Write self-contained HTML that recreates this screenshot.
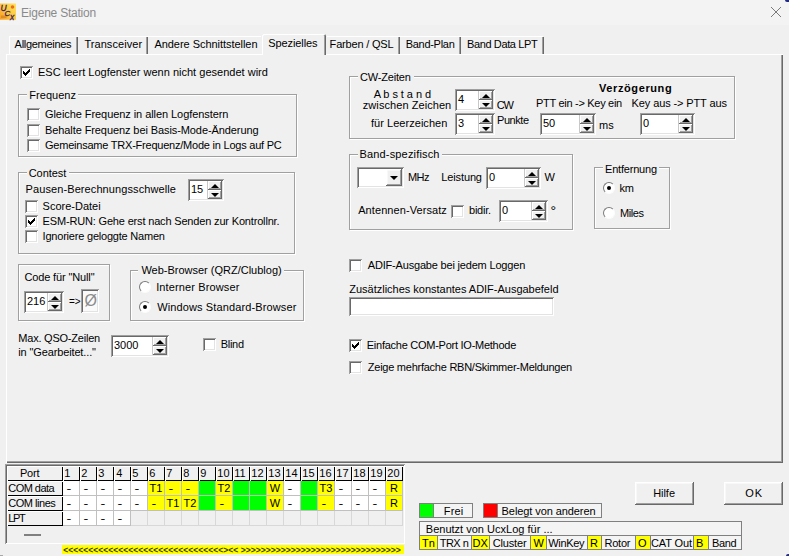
<!DOCTYPE html><html><head><meta charset="utf-8"><title>Eigene Station</title><style>
html,body{margin:0;padding:0;}
body{width:789px;height:556px;overflow:hidden;background:#f0f0f0;position:relative;
 font-family:"Liberation Sans",sans-serif;font-size:11px;color:#000;line-height:13px;}
div,span,i,b{position:absolute;box-sizing:border-box;white-space:nowrap;}
.t{height:13px;}
.cb{width:13px;height:13px;background:#fff;box-shadow:inset 1px 1px 0 #a0a0a0,inset -1px -1px 0 #fff,inset 2px 2px 0 #696969,inset -2px -2px 0 #e3e3e3;}
.cb.on::after{content:"";position:absolute;left:3px;top:3px;width:7px;height:7px;
 background:linear-gradient(#000,#000);clip-path:polygon(0 2px,1px 2px,1px 3px,2px 3px,2px 4px,3px 4px,3px 3px,4px 3px,4px 2px,5px 2px,5px 1px,6px 1px,6px 0,7px 0,7px 3px,6px 3px,6px 4px,5px 4px,5px 5px,4px 5px,4px 6px,3px 6px,3px 7px,2px 7px,2px 6px,1px 6px,1px 5px,0 5px);}
.rb{width:12px;height:12px;border-radius:50%;background:#fff;border:1.5px solid;border-color:#7a7a7a #fbfbfb #fbfbfb #7a7a7a;}
.rb.on::after{content:"";position:absolute;left:2.5px;top:2.5px;width:4px;height:4px;border-radius:50%;background:#000;}
.gb{border:1px solid #a0a0a0;box-shadow:1px 1px 0 #fff,inset 1px 1px 0 #fff;}
.gl{background:#f0f0f0;height:13px;padding:0 2px;}
.sp{background:#fff;box-shadow:inset 1px 1px 0 #a0a0a0,inset -1px -1px 0 #fff,inset 2px 2px 0 #696969,inset -2px -2px 0 #e3e3e3;}
.sp .v{left:3px;}
.ud{right:2px;top:2px;bottom:2px;width:15px;background:#f0f0f0;border-left:1px solid #c8c8c8;}
.ud i{left:0;right:0;height:50%;background:#f0f0f0;box-shadow:inset -1px -1px 0 #696969,inset 1px 1px 0 #fff,inset -2px -2px 0 #a0a0a0;}
.ud i.u{top:0;} .ud i.d{bottom:0;}
.ud i::after{content:"";position:absolute;left:50%;top:50%;margin-left:-4px;margin-top:-2px;border:4px solid transparent;}
.ud i.u::after{border-top-width:0;border-bottom:4px solid #000;}
.ud i.d::after{border-bottom-width:0;border-top:4px solid #000;}
.btn{background:#f0f0f0;text-align:center;box-shadow:inset -1px -1px 0 #696969,inset 1px 1px 0 #fff,inset -2px -2px 0 #a0a0a0,inset 2px 2px 0 #f8f8f8;}
.y{background:#ffff00;}
</style></head><body>
<div style="left:0;top:0;width:789px;height:25px;background:#f3f3f3"></div>
<svg style="position:absolute;left:0;top:3px" width="17" height="18" viewBox="0 0 17 18">
<defs><linearGradient id="ig" x1="1" y1="0" x2="0" y2="1"><stop offset="0" stop-color="#ffe45e"/><stop offset=".55" stop-color="#fbc53c"/><stop offset="1" stop-color="#f59a22"/></linearGradient></defs>
<rect x="0" y="0.5" width="16" height="16.2" fill="url(#ig)"/>
<circle cx="12.5" cy="4" r="1.8" fill="#ea6a1c"/>
<rect x="1" y="12.5" width="5.5" height="2.5" fill="#c8741e" opacity=".55"/>
<text x="0.6" y="7.8" font-family="Liberation Sans,sans-serif" font-size="8.5" font-style="italic" fill="#3b2060" stroke="#3b2060" stroke-width=".3">U</text>
<text x="4.6" y="12.5" font-family="Liberation Sans,sans-serif" font-size="8" font-style="italic" fill="#3b2060" stroke="#3b2060" stroke-width=".3">C</text>
<text x="9.9" y="16.5" font-family="Liberation Sans,sans-serif" font-size="8.5" font-style="italic" fill="#3b2060" stroke="#3b2060" stroke-width=".3">x</text>
</svg>
<span class="t" style="left:21.0px;top:7.3px;letter-spacing:-0.223px;font-size:12px;color:#8a8a8a;">Eigene Station</span>
<svg style="position:absolute;left:770px;top:6px" width="12" height="12" viewBox="0 0 12 12"><path d="M1 1 L11 11 M11 1 L1 11" stroke="#7a7a7a" stroke-width="1" fill="none"/></svg>
<div style="left:785px;top:0;width:4px;height:2px;background:#1f2a8c;border-radius:0 0 0 4px"></div>
<div style="left:786px;top:554px;width:3px;height:2px;background:#1f2a8c;border-radius:3px 0 0 0"></div>
<div style="left:0;top:555px;width:3px;height:1px;background:#a8a8a8"></div>
<div style="left:6px;top:54px;width:777px;height:409px;box-shadow:inset 1px 1px 0 #fff,inset -1px -1px 0 #696969,inset -2px -2px 0 #a0a0a0"></div>
<span class="t" style="left:14.6px;top:38.0px;letter-spacing:-0.300px;">Allgemeines</span>
<div style="left:76px;top:37px;width:2px;height:17px;background:linear-gradient(90deg,#a0a0a0 50%,#696969 50%)"></div>
<span class="t" style="left:84.4px;top:38.0px;letter-spacing:0.060px;">Transceiver</span>
<div style="left:146px;top:37px;width:2px;height:17px;background:linear-gradient(90deg,#a0a0a0 50%,#696969 50%)"></div>
<span class="t" style="left:154.4px;top:38.0px;letter-spacing:-0.040px;">Andere Schnittstellen</span>
<div style="left:262px;top:34px;width:64px;height:21px;background:#f0f0f0;box-shadow:inset 1px 1px 0 #fff,inset -1px 0 0 #696969,inset -2px 0 0 #a0a0a0;border-radius:2px 2px 0 0"></div>
<span class="t" style="left:268.3px;top:37.0px;letter-spacing:-0.100px;">Spezielles</span>
<span class="t" style="left:329.6px;top:38.0px;letter-spacing:-0.182px;">Farben / QSL</span>
<div style="left:398px;top:37px;width:2px;height:17px;background:linear-gradient(90deg,#a0a0a0 50%,#696969 50%)"></div>
<span class="t" style="left:405.7px;top:38.0px;letter-spacing:-0.288px;">Band-Plan</span>
<div style="left:459px;top:37px;width:2px;height:17px;background:linear-gradient(90deg,#a0a0a0 50%,#696969 50%)"></div>
<span class="t" style="left:467.0px;top:38.0px;letter-spacing:-0.375px;">Band Data LPT</span>
<div style="left:542px;top:37px;width:2px;height:17px;background:linear-gradient(90deg,#a0a0a0 50%,#696969 50%)"></div>
<div style="left:9px;top:36px;width:252px;height:1px;background:#fff"></div>
<div style="left:9px;top:36px;width:1px;height:18px;background:#fff"></div>
<div style="left:327px;top:36px;width:216px;height:1px;background:#fff"></div>
<i class="cb on" style="left:20px;top:66px"></i>
<span class="t" style="left:38.0px;top:66.0px;letter-spacing:0.014px;">ESC leert Logfenster wenn nicht gesendet wird</span>
<div class="gb" style="left:18px;top:94px;width:279px;height:63px"></div>
<div style="left:27.3px;top:88px;width:51.2px;height:13px;background:#f0f0f0"></div>
<span class="t" style="left:29.3px;top:89.0px;letter-spacing:0.029px;">Frequenz</span>
<i class="cb" style="left:27px;top:108px"></i>
<span class="t" style="left:45.0px;top:108.0px;letter-spacing:-0.067px;">Gleiche Frequenz in allen Logfenstern</span>
<i class="cb" style="left:27px;top:124px"></i>
<span class="t" style="left:45.0px;top:124.0px;letter-spacing:-0.090px;">Behalte Frequenz bei Basis-Mode-Änderung</span>
<i class="cb" style="left:27px;top:139px"></i>
<span class="t" style="left:45.0px;top:139.0px;letter-spacing:-0.224px;">Gemeinsame TRX-Frequenz/Mode in Logs auf PC</span>
<div class="gb" style="left:18px;top:172px;width:277px;height:82px"></div>
<div style="left:26.7px;top:166px;width:42.7px;height:13px;background:#f0f0f0"></div>
<span class="t" style="left:28.7px;top:167.0px;letter-spacing:-0.050px;">Contest</span>
<span class="t" style="left:25.6px;top:183.0px;letter-spacing:0.092px;">Pausen-Berechnungsschwelle</span>
<div class="sp" style="left:188px;top:179px;width:36px;height:22px"><span class="v t" style="top:4px">15</span><div class="ud"><i class="u"></i><i class="d"></i></div></div>
<i class="cb" style="left:25px;top:200px"></i>
<span class="t" style="left:42.6px;top:200.0px;letter-spacing:-0.000px;">Score-Datei</span>
<i class="cb on" style="left:25px;top:215px"></i>
<span class="t" style="left:42.6px;top:215.0px;letter-spacing:-0.169px;">ESM-RUN: Gehe erst nach Senden zur Kontrollnr.</span>
<i class="cb" style="left:25px;top:230px"></i>
<span class="t" style="left:42.6px;top:230.0px;letter-spacing:-0.209px;">Ignoriere geloggte Namen</span>
<div class="gb" style="left:18px;top:264px;width:92px;height:57px"></div>
<span class="t" style="left:24.4px;top:271.0px;letter-spacing:-0.129px;">Code für "Null"</span>
<div class="sp" style="left:24px;top:291px;width:40px;height:22px"><span class="v t" style="top:4px">216</span><div class="ud"><i class="u"></i><i class="d"></i></div></div>
<span class="t" style="left:69.0px;top:295.3px;letter-spacing:-0.200px;font-size:10px;">=&gt;</span>
<div class="sp" style="left:81px;top:289px;width:18px;height:24px;background:#fafafa"><span style="left:3.5px;top:2px;font-size:16px;line-height:20px;color:#8c8c8c">Ø</span></div>
<div class="gb" style="left:130px;top:270px;width:174px;height:51px"></div>
<div style="left:138.4px;top:264px;width:145.9px;height:13px;background:#f0f0f0"></div>
<span class="t" style="left:141.4px;top:264.0px;letter-spacing:-0.004px;">Web-Browser (QRZ/Clublog)</span>
<i class="rb" style="left:139px;top:281px"></i>
<span class="t" style="left:156.2px;top:281.0px;letter-spacing:0.120px;">Interner Browser</span>
<i class="rb on" style="left:139px;top:301px"></i>
<span class="t" style="left:157.2px;top:301.0px;letter-spacing:0.122px;">Windows Standard-Browser</span>
<span class="t" style="left:18.3px;top:332.0px;letter-spacing:-0.221px;">Max. QSO-Zeilen</span>
<span class="t" style="left:18.3px;top:346.0px;letter-spacing:-0.135px;">in "Gearbeitet..."</span>
<div class="sp" style="left:111px;top:335px;width:58px;height:22px"><span class="v t" style="top:4px">3000</span><div class="ud"><i class="u"></i><i class="d"></i></div></div>
<i class="cb" style="left:203px;top:338px"></i>
<span class="t" style="left:220.8px;top:338.0px;letter-spacing:-0.300px;">Blind</span>
<div class="gb" style="left:349px;top:76px;width:386px;height:63px"></div>
<div style="left:358.0px;top:70px;width:55.5px;height:13px;background:#f0f0f0"></div>
<span class="t" style="left:360.0px;top:71.0px;letter-spacing:-0.188px;">CW-Zeiten</span>
<span class="t" style="left:373.7px;top:88.0px;letter-spacing:-0.058px;">A b s t a n d</span>
<span class="t" style="left:362.8px;top:99.0px;letter-spacing:0.067px;">zwischen Zeichen</span>
<span class="t" style="left:371.0px;top:117.0px;letter-spacing:0.036px;">für Leerzeichen</span>
<div class="sp" style="left:455px;top:89px;width:40px;height:22px"><span class="v t" style="top:4px">4</span><div class="ud"><i class="u"></i><i class="d"></i></div></div>
<div class="sp" style="left:455px;top:113px;width:40px;height:22px"><span class="v t" style="top:4px">3</span><div class="ud"><i class="u"></i><i class="d"></i></div></div>
<span class="t" style="left:496.7px;top:99.0px;letter-spacing:-1.100px;">CW</span>
<span class="t" style="left:497.0px;top:114.0px;letter-spacing:-0.440px;">Punkte</span>
<span class="t" style="left:599.0px;top:82.0px;letter-spacing:0.600px;font-weight:bold">Verzögerung</span>
<span class="t" style="left:536.0px;top:97.0px;letter-spacing:-0.294px;">PTT ein -&gt; Key ein</span>
<span class="t" style="left:631.6px;top:97.0px;letter-spacing:-0.118px;">Key aus -&gt; PTT aus</span>
<div class="sp" style="left:540px;top:113px;width:56px;height:22px"><span class="v t" style="top:4px">50</span><div class="ud"><i class="u"></i><i class="d"></i></div></div>
<span class="t" style="left:599.0px;top:119.0px;">ms</span>
<div class="sp" style="left:640px;top:113px;width:55px;height:22px"><span class="v t" style="top:4px">0</span><div class="ud"><i class="u"></i><i class="d"></i></div></div>
<div class="gb" style="left:349px;top:154px;width:224px;height:76px"></div>
<div style="left:357.5px;top:148px;width:84.3px;height:13px;background:#f0f0f0"></div>
<span class="t" style="left:359.5px;top:148.0px;letter-spacing:0.164px;">Band-spezifisch</span>
<div class="sp" style="left:357px;top:167px;width:47px;height:21px"><div class="btn" style="right:2px;top:2px;width:16px;height:17px"><i style="left:4px;top:7px;border:4px solid transparent;border-top:4px solid #000;border-bottom:0"></i></div></div>
<span class="t" style="left:408.0px;top:171.0px;letter-spacing:-0.600px;">MHz</span>
<span class="t" style="left:441.3px;top:171.0px;letter-spacing:-0.129px;">Leistung</span>
<div class="sp" style="left:486px;top:167px;width:55px;height:22px"><span class="v t" style="top:4px">0</span><div class="ud"><i class="u"></i><i class="d"></i></div></div>
<span class="t" style="left:544.4px;top:171.0px;">W</span>
<span class="t" style="left:358.2px;top:204.0px;letter-spacing:0.080px;">Antennen-Versatz</span>
<i class="cb" style="left:451px;top:205px"></i>
<span class="t" style="left:469.0px;top:204.0px;letter-spacing:-0.240px;">bidir.</span>
<div class="sp" style="left:499px;top:200px;width:49px;height:22px"><span class="v t" style="top:4px">0</span><div class="ud"><i class="u"></i><i class="d"></i></div></div>
<span class="t" style="left:550.4px;top:205.0px;font-size:14px;">°</span>
<div class="gb" style="left:594px;top:167px;width:76px;height:62px"></div>
<div style="left:603.0px;top:161px;width:56.2px;height:13px;background:#f0f0f0"></div>
<span class="t" style="left:605.0px;top:163.0px;letter-spacing:-0.200px;">Entfernung</span>
<i class="rb on" style="left:603px;top:182px"></i>
<span class="t" style="left:619.5px;top:182.0px;letter-spacing:-0.300px;">km</span>
<i class="rb" style="left:603px;top:207px"></i>
<span class="t" style="left:620.0px;top:207.0px;letter-spacing:-0.425px;">Miles</span>
<i class="cb" style="left:349px;top:259px"></i>
<span class="t" style="left:367.8px;top:259.0px;letter-spacing:-0.186px;">ADIF-Ausgabe bei jedem Loggen</span>
<span class="t" style="left:349.3px;top:283.0px;letter-spacing:-0.013px;">Zusätzliches konstantes ADIF-Ausgabefeld</span>
<div class="sp" style="left:349px;top:297px;width:205px;height:19px"></div>
<i class="cb on" style="left:349px;top:339px"></i>
<span class="t" style="left:366.8px;top:339.0px;letter-spacing:-0.259px;">Einfache COM-Port IO-Methode</span>
<i class="cb" style="left:349px;top:361px"></i>
<span class="t" style="left:367.8px;top:361.0px;letter-spacing:-0.250px;">Zeige mehrfache RBN/Skimmer-Meldungen</span>
<div class="btn" style="left:635px;top:482px;width:59px;height:23px"></div>
<span class="t" style="left:653.2px;top:487.0px;letter-spacing:-0.050px;">Hilfe</span>
<div class="btn" style="left:724px;top:482px;width:59px;height:23px"></div>
<span class="t" style="left:745.2px;top:487.0px;letter-spacing:1.000px;">OK</span>
<div style="left:419px;top:503px;width:54px;height:15px;border:1px solid #808080;background:#f4f4f4"></div>
<div style="left:420px;top:504px;width:14px;height:13px;background:#00ff00;border-right:1px solid #808080"></div>
<span class="t" style="left:443.8px;top:505.0px;letter-spacing:0.133px;">Frei</span>
<div style="left:483px;top:503px;width:119px;height:15px;border:1px solid #808080;background:#f4f4f4"></div>
<div style="left:484px;top:504px;width:14px;height:13px;background:#ff0000;border-right:1px solid #808080"></div>
<span class="t" style="left:501.6px;top:505.0px;letter-spacing:-0.082px;">Belegt von anderen</span>
<div style="left:419px;top:521px;width:323px;height:29px;border:1px solid #808080;background:#f4f4f4"></div>
<div style="left:419px;top:535px;width:323px;height:1px;background:#808080"></div>
<span class="t" style="left:425.8px;top:523.0px;letter-spacing:0.008px;">Benutzt von UcxLog für ...</span>
<div class="y" style="left:419px;top:536px;width:19px;height:13px;border-left:1px solid #808080;border-right:1px solid #808080"></div>
<span class="t" style="left:422.0px;top:537.0px;letter-spacing:0.000px;">Tn</span>
<span class="t" style="left:439.8px;top:537.0px;letter-spacing:-0.550px;">TRX n</span>
<div class="y" style="left:471px;top:536px;width:19px;height:13px;border-left:1px solid #808080;border-right:1px solid #808080"></div>
<span class="t" style="left:472.4px;top:537.0px;letter-spacing:0.200px;">DX</span>
<span class="t" style="left:492.8px;top:537.0px;letter-spacing:-0.183px;">Cluster</span>
<div class="y" style="left:530px;top:536px;width:17px;height:13px;border-left:1px solid #808080;border-right:1px solid #808080"></div>
<span class="t" style="left:533.6px;top:537.0px;">W</span>
<span class="t" style="left:548.3px;top:537.0px;letter-spacing:-0.360px;">WinKey</span>
<div class="y" style="left:587px;top:536px;width:15px;height:13px;border-left:1px solid #808080;border-right:1px solid #808080"></div>
<span class="t" style="left:590.0px;top:537.0px;">R</span>
<span class="t" style="left:604.6px;top:537.0px;letter-spacing:-0.275px;">Rotor</span>
<div class="y" style="left:635px;top:536px;width:16px;height:13px;border-left:1px solid #808080;border-right:1px solid #808080"></div>
<span class="t" style="left:638.0px;top:537.0px;">O</span>
<span class="t" style="left:651.0px;top:537.0px;letter-spacing:-0.117px;">CAT Out</span>
<div class="y" style="left:693px;top:536px;width:16px;height:13px;border-left:1px solid #808080;border-right:1px solid #808080"></div>
<span class="t" style="left:695.9px;top:537.0px;">B</span>
<span class="t" style="left:711.9px;top:537.0px;letter-spacing:-0.300px;">Band</span>
<div style="left:5px;top:464px;width:400px;height:80px;background:#f0f0f0;box-shadow:inset 1px 1px 0 #a0a0a0,inset -1px -1px 0 #fff,inset 2px 2px 0 #696969"></div>
<div style="left:7px;top:466px;width:56px;height:15px;box-shadow:inset 1px 1px 0 #fff,inset -1px -1px 0 #000"></div>
<span class="t" style="left:20.0px;top:467.0px;letter-spacing:-0.233px;">Port</span>
<div style="left:7px;top:481px;width:56px;height:15px;box-shadow:inset 1px 1px 0 #fff,inset -1px -1px 0 #000"></div>
<span class="t" style="left:8.3px;top:482.0px;letter-spacing:-0.543px;">COM data</span>
<div style="left:7px;top:496px;width:56px;height:15px;box-shadow:inset 1px 1px 0 #fff,inset -1px -1px 0 #000"></div>
<span class="t" style="left:8.3px;top:497.0px;letter-spacing:-0.475px;">COM lines</span>
<div style="left:7px;top:511px;width:56px;height:15px;box-shadow:inset 1px 1px 0 #fff,inset -1px -1px 0 #000"></div>
<span class="t" style="left:8.3px;top:512.0px;letter-spacing:-1.350px;">LPT</span>
<div style="left:63px;top:466px;width:17px;height:15px;box-shadow:inset 1px 1px 0 #fff,inset -1px -1px 0 #000"></div>
<span class="t" style="left:64.3px;top:467.0px;">1</span>
<div style="left:80px;top:466px;width:17px;height:15px;box-shadow:inset 1px 1px 0 #fff,inset -1px -1px 0 #000"></div>
<span class="t" style="left:81.3px;top:467.0px;">2</span>
<div style="left:97px;top:466px;width:17px;height:15px;box-shadow:inset 1px 1px 0 #fff,inset -1px -1px 0 #000"></div>
<span class="t" style="left:98.3px;top:467.0px;">3</span>
<div style="left:114px;top:466px;width:17px;height:15px;box-shadow:inset 1px 1px 0 #fff,inset -1px -1px 0 #000"></div>
<span class="t" style="left:116.3px;top:467.0px;">4</span>
<div style="left:131px;top:466px;width:17px;height:15px;box-shadow:inset 1px 1px 0 #fff,inset -1px -1px 0 #000"></div>
<span class="t" style="left:132.3px;top:467.0px;">5</span>
<div style="left:148px;top:466px;width:17px;height:15px;box-shadow:inset 1px 1px 0 #fff,inset -1px -1px 0 #000"></div>
<span class="t" style="left:149.3px;top:467.0px;">6</span>
<div style="left:165px;top:466px;width:17px;height:15px;box-shadow:inset 1px 1px 0 #fff,inset -1px -1px 0 #000"></div>
<span class="t" style="left:166.3px;top:467.0px;">7</span>
<div style="left:182px;top:466px;width:17px;height:15px;box-shadow:inset 1px 1px 0 #fff,inset -1px -1px 0 #000"></div>
<span class="t" style="left:183.3px;top:467.0px;">8</span>
<div style="left:199px;top:466px;width:17px;height:15px;box-shadow:inset 1px 1px 0 #fff,inset -1px -1px 0 #000"></div>
<span class="t" style="left:200.3px;top:467.0px;">9</span>
<div style="left:216px;top:466px;width:17px;height:15px;box-shadow:inset 1px 1px 0 #fff,inset -1px -1px 0 #000"></div>
<span class="t" style="left:217.3px;top:467.0px;">10</span>
<div style="left:233px;top:466px;width:17px;height:15px;box-shadow:inset 1px 1px 0 #fff,inset -1px -1px 0 #000"></div>
<span class="t" style="left:234.3px;top:467.0px;">11</span>
<div style="left:250px;top:466px;width:17px;height:15px;box-shadow:inset 1px 1px 0 #fff,inset -1px -1px 0 #000"></div>
<span class="t" style="left:251.3px;top:467.0px;">12</span>
<div style="left:267px;top:466px;width:17px;height:15px;box-shadow:inset 1px 1px 0 #fff,inset -1px -1px 0 #000"></div>
<span class="t" style="left:268.3px;top:467.0px;">13</span>
<div style="left:284px;top:466px;width:17px;height:15px;box-shadow:inset 1px 1px 0 #fff,inset -1px -1px 0 #000"></div>
<span class="t" style="left:285.3px;top:467.0px;">14</span>
<div style="left:301px;top:466px;width:17px;height:15px;box-shadow:inset 1px 1px 0 #fff,inset -1px -1px 0 #000"></div>
<span class="t" style="left:302.3px;top:467.0px;">15</span>
<div style="left:318px;top:466px;width:17px;height:15px;box-shadow:inset 1px 1px 0 #fff,inset -1px -1px 0 #000"></div>
<span class="t" style="left:319.3px;top:467.0px;">16</span>
<div style="left:335px;top:466px;width:17px;height:15px;box-shadow:inset 1px 1px 0 #fff,inset -1px -1px 0 #000"></div>
<span class="t" style="left:336.3px;top:467.0px;">17</span>
<div style="left:352px;top:466px;width:17px;height:15px;box-shadow:inset 1px 1px 0 #fff,inset -1px -1px 0 #000"></div>
<span class="t" style="left:353.3px;top:467.0px;">18</span>
<div style="left:369px;top:466px;width:17px;height:15px;box-shadow:inset 1px 1px 0 #fff,inset -1px -1px 0 #000"></div>
<span class="t" style="left:370.3px;top:467.0px;">19</span>
<div style="left:386px;top:466px;width:17px;height:15px;box-shadow:inset 1px 1px 0 #fff,inset -1px -1px 0 #000"></div>
<span class="t" style="left:387.3px;top:467.0px;">20</span>
<div style="left:63px;top:481px;width:17px;height:15px;line-height:14px;text-align:center;background:#fff;border-right:1px solid #c0c0c0;border-bottom:1px solid #c0c0c0"><b style="position:static;display:inline-block;font-weight:normal;transform:scaleX(1.3);margin-right:4px">-</b></div>
<div style="left:80px;top:481px;width:17px;height:15px;line-height:14px;text-align:center;background:#fff;border-right:1px solid #c0c0c0;border-bottom:1px solid #c0c0c0"><b style="position:static;display:inline-block;font-weight:normal;transform:scaleX(1.3);margin-right:4px">-</b></div>
<div style="left:97px;top:481px;width:17px;height:15px;line-height:14px;text-align:center;background:#fff;border-right:1px solid #c0c0c0;border-bottom:1px solid #c0c0c0"><b style="position:static;display:inline-block;font-weight:normal;transform:scaleX(1.3);margin-right:4px">-</b></div>
<div style="left:114px;top:481px;width:17px;height:15px;line-height:14px;text-align:center;background:#fff;border-right:1px solid #c0c0c0;border-bottom:1px solid #c0c0c0"><b style="position:static;display:inline-block;font-weight:normal;transform:scaleX(1.3);margin-right:4px">-</b></div>
<div style="left:131px;top:481px;width:17px;height:15px;line-height:14px;text-align:center;background:#fff;border-right:1px solid #c0c0c0;border-bottom:1px solid #c0c0c0"><b style="position:static;display:inline-block;font-weight:normal;transform:scaleX(1.3);margin-right:4px">-</b></div>
<div style="left:148px;top:481px;width:17px;height:15px;line-height:14px;text-align:center;background:#ffff00;border-right:1px solid #c0c0c0;border-bottom:1px solid #c0c0c0">T1</div>
<div style="left:165px;top:481px;width:17px;height:15px;line-height:14px;text-align:center;background:#ffff00;border-right:1px solid #c0c0c0;border-bottom:1px solid #c0c0c0"><b style="position:static;display:inline-block;font-weight:normal;transform:scaleX(1.3);margin-right:4px">-</b></div>
<div style="left:182px;top:481px;width:17px;height:15px;line-height:14px;text-align:center;background:#ffff00;border-right:1px solid #c0c0c0;border-bottom:1px solid #c0c0c0"><b style="position:static;display:inline-block;font-weight:normal;transform:scaleX(1.3);margin-right:4px">-</b></div>
<div style="left:199px;top:481px;width:17px;height:15px;line-height:14px;text-align:center;background:#00ff00;border-right:1px solid #c0c0c0;border-bottom:1px solid #c0c0c0"></div>
<div style="left:216px;top:481px;width:17px;height:15px;line-height:14px;text-align:center;background:#ffff00;border-right:1px solid #c0c0c0;border-bottom:1px solid #c0c0c0">T2</div>
<div style="left:233px;top:481px;width:17px;height:15px;line-height:14px;text-align:center;background:#00ff00;border-right:1px solid #c0c0c0;border-bottom:1px solid #c0c0c0"></div>
<div style="left:250px;top:481px;width:17px;height:15px;line-height:14px;text-align:center;background:#00ff00;border-right:1px solid #c0c0c0;border-bottom:1px solid #c0c0c0"></div>
<div style="left:267px;top:481px;width:17px;height:15px;line-height:14px;text-align:center;background:#ffff00;border-right:1px solid #c0c0c0;border-bottom:1px solid #c0c0c0">W</div>
<div style="left:284px;top:481px;width:17px;height:15px;line-height:14px;text-align:center;background:#fff;border-right:1px solid #c0c0c0;border-bottom:1px solid #c0c0c0"><b style="position:static;display:inline-block;font-weight:normal;transform:scaleX(1.3);margin-right:4px">-</b></div>
<div style="left:301px;top:481px;width:17px;height:15px;line-height:14px;text-align:center;background:#00ff00;border-right:1px solid #c0c0c0;border-bottom:1px solid #c0c0c0"></div>
<div style="left:318px;top:481px;width:17px;height:15px;line-height:14px;text-align:center;background:#ffff00;border-right:1px solid #c0c0c0;border-bottom:1px solid #c0c0c0">T3</div>
<div style="left:335px;top:481px;width:17px;height:15px;line-height:14px;text-align:center;background:#fff;border-right:1px solid #c0c0c0;border-bottom:1px solid #c0c0c0"><b style="position:static;display:inline-block;font-weight:normal;transform:scaleX(1.3);margin-right:4px">-</b></div>
<div style="left:352px;top:481px;width:17px;height:15px;line-height:14px;text-align:center;background:#fff;border-right:1px solid #c0c0c0;border-bottom:1px solid #c0c0c0"><b style="position:static;display:inline-block;font-weight:normal;transform:scaleX(1.3);margin-right:4px">-</b></div>
<div style="left:369px;top:481px;width:17px;height:15px;line-height:14px;text-align:center;background:#fff;border-right:1px solid #c0c0c0;border-bottom:1px solid #c0c0c0"><b style="position:static;display:inline-block;font-weight:normal;transform:scaleX(1.3);margin-right:4px">-</b></div>
<div style="left:386px;top:481px;width:17px;height:15px;line-height:14px;text-align:center;background:#ffff00;border-right:1px solid #c0c0c0;border-bottom:1px solid #c0c0c0">R</div>
<div style="left:63px;top:496px;width:17px;height:15px;line-height:14px;text-align:center;background:#fff;border-right:1px solid #c0c0c0;border-bottom:1px solid #c0c0c0"><b style="position:static;display:inline-block;font-weight:normal;transform:scaleX(1.3);margin-right:4px">-</b></div>
<div style="left:80px;top:496px;width:17px;height:15px;line-height:14px;text-align:center;background:#fff;border-right:1px solid #c0c0c0;border-bottom:1px solid #c0c0c0"><b style="position:static;display:inline-block;font-weight:normal;transform:scaleX(1.3);margin-right:4px">-</b></div>
<div style="left:97px;top:496px;width:17px;height:15px;line-height:14px;text-align:center;background:#fff;border-right:1px solid #c0c0c0;border-bottom:1px solid #c0c0c0"><b style="position:static;display:inline-block;font-weight:normal;transform:scaleX(1.3);margin-right:4px">-</b></div>
<div style="left:114px;top:496px;width:17px;height:15px;line-height:14px;text-align:center;background:#fff;border-right:1px solid #c0c0c0;border-bottom:1px solid #c0c0c0"><b style="position:static;display:inline-block;font-weight:normal;transform:scaleX(1.3);margin-right:4px">-</b></div>
<div style="left:131px;top:496px;width:17px;height:15px;line-height:14px;text-align:center;background:#fff;border-right:1px solid #c0c0c0;border-bottom:1px solid #c0c0c0"><b style="position:static;display:inline-block;font-weight:normal;transform:scaleX(1.3);margin-right:4px">-</b></div>
<div style="left:148px;top:496px;width:17px;height:15px;line-height:14px;text-align:center;background:#ffff00;border-right:1px solid #c0c0c0;border-bottom:1px solid #c0c0c0"><b style="position:static;display:inline-block;font-weight:normal;transform:scaleX(1.3);margin-right:4px">-</b></div>
<div style="left:165px;top:496px;width:17px;height:15px;line-height:14px;text-align:center;background:#ffff00;border-right:1px solid #c0c0c0;border-bottom:1px solid #c0c0c0">T1</div>
<div style="left:182px;top:496px;width:17px;height:15px;line-height:14px;text-align:center;background:#ffff00;border-right:1px solid #c0c0c0;border-bottom:1px solid #c0c0c0">T2</div>
<div style="left:199px;top:496px;width:17px;height:15px;line-height:14px;text-align:center;background:#00ff00;border-right:1px solid #c0c0c0;border-bottom:1px solid #c0c0c0"></div>
<div style="left:216px;top:496px;width:17px;height:15px;line-height:14px;text-align:center;background:#ffff00;border-right:1px solid #c0c0c0;border-bottom:1px solid #c0c0c0"><b style="position:static;display:inline-block;font-weight:normal;transform:scaleX(1.3);margin-right:4px">-</b></div>
<div style="left:233px;top:496px;width:17px;height:15px;line-height:14px;text-align:center;background:#00ff00;border-right:1px solid #c0c0c0;border-bottom:1px solid #c0c0c0"></div>
<div style="left:250px;top:496px;width:17px;height:15px;line-height:14px;text-align:center;background:#00ff00;border-right:1px solid #c0c0c0;border-bottom:1px solid #c0c0c0"></div>
<div style="left:267px;top:496px;width:17px;height:15px;line-height:14px;text-align:center;background:#ffff00;border-right:1px solid #c0c0c0;border-bottom:1px solid #c0c0c0">W</div>
<div style="left:284px;top:496px;width:17px;height:15px;line-height:14px;text-align:center;background:#fff;border-right:1px solid #c0c0c0;border-bottom:1px solid #c0c0c0"><b style="position:static;display:inline-block;font-weight:normal;transform:scaleX(1.3);margin-right:4px">-</b></div>
<div style="left:301px;top:496px;width:17px;height:15px;line-height:14px;text-align:center;background:#00ff00;border-right:1px solid #c0c0c0;border-bottom:1px solid #c0c0c0"></div>
<div style="left:318px;top:496px;width:17px;height:15px;line-height:14px;text-align:center;background:#ffff00;border-right:1px solid #c0c0c0;border-bottom:1px solid #c0c0c0"><b style="position:static;display:inline-block;font-weight:normal;transform:scaleX(1.3);margin-right:4px">-</b></div>
<div style="left:335px;top:496px;width:17px;height:15px;line-height:14px;text-align:center;background:#fff;border-right:1px solid #c0c0c0;border-bottom:1px solid #c0c0c0"><b style="position:static;display:inline-block;font-weight:normal;transform:scaleX(1.3);margin-right:4px">-</b></div>
<div style="left:352px;top:496px;width:17px;height:15px;line-height:14px;text-align:center;background:#fff;border-right:1px solid #c0c0c0;border-bottom:1px solid #c0c0c0"><b style="position:static;display:inline-block;font-weight:normal;transform:scaleX(1.3);margin-right:4px">-</b></div>
<div style="left:369px;top:496px;width:17px;height:15px;line-height:14px;text-align:center;background:#fff;border-right:1px solid #c0c0c0;border-bottom:1px solid #c0c0c0"><b style="position:static;display:inline-block;font-weight:normal;transform:scaleX(1.3);margin-right:4px">-</b></div>
<div style="left:386px;top:496px;width:17px;height:15px;line-height:14px;text-align:center;background:#ffff00;border-right:1px solid #c0c0c0;border-bottom:1px solid #c0c0c0">R</div>
<div style="left:63px;top:511px;width:17px;height:15px;line-height:14px;text-align:center;background:#fff;border-right:1px solid #c0c0c0;border-bottom:1px solid #c0c0c0"><b style="position:static;display:inline-block;font-weight:normal;transform:scaleX(1.3);margin-right:4px">-</b></div>
<div style="left:80px;top:511px;width:17px;height:15px;line-height:14px;text-align:center;background:#fff;border-right:1px solid #c0c0c0;border-bottom:1px solid #c0c0c0"><b style="position:static;display:inline-block;font-weight:normal;transform:scaleX(1.3);margin-right:4px">-</b></div>
<div style="left:97px;top:511px;width:17px;height:15px;line-height:14px;text-align:center;background:#fff;border-right:1px solid #c0c0c0;border-bottom:1px solid #c0c0c0"><b style="position:static;display:inline-block;font-weight:normal;transform:scaleX(1.3);margin-right:4px">-</b></div>
<div style="left:114px;top:511px;width:17px;height:15px;line-height:14px;text-align:center;background:#fff;border-right:1px solid #c0c0c0;border-bottom:1px solid #c0c0c0"><b style="position:static;display:inline-block;font-weight:normal;transform:scaleX(1.3);margin-right:4px">-</b></div>
<div style="left:131px;top:511px;width:17px;height:15px;line-height:14px;text-align:center;background:#f0f0f0;border-right:1px solid #d8d8d8;border-bottom:1px solid #d8d8d8"></div>
<div style="left:148px;top:511px;width:17px;height:15px;line-height:14px;text-align:center;background:#f0f0f0;border-right:1px solid #d8d8d8;border-bottom:1px solid #d8d8d8"></div>
<div style="left:165px;top:511px;width:17px;height:15px;line-height:14px;text-align:center;background:#f0f0f0;border-right:1px solid #d8d8d8;border-bottom:1px solid #d8d8d8"></div>
<div style="left:182px;top:511px;width:17px;height:15px;line-height:14px;text-align:center;background:#f0f0f0;border-right:1px solid #d8d8d8;border-bottom:1px solid #d8d8d8"></div>
<div style="left:199px;top:511px;width:17px;height:15px;line-height:14px;text-align:center;background:#f0f0f0;border-right:1px solid #d8d8d8;border-bottom:1px solid #d8d8d8"></div>
<div style="left:216px;top:511px;width:17px;height:15px;line-height:14px;text-align:center;background:#f0f0f0;border-right:1px solid #d8d8d8;border-bottom:1px solid #d8d8d8"></div>
<div style="left:233px;top:511px;width:17px;height:15px;line-height:14px;text-align:center;background:#f0f0f0;border-right:1px solid #d8d8d8;border-bottom:1px solid #d8d8d8"></div>
<div style="left:250px;top:511px;width:17px;height:15px;line-height:14px;text-align:center;background:#f0f0f0;border-right:1px solid #d8d8d8;border-bottom:1px solid #d8d8d8"></div>
<div style="left:267px;top:511px;width:17px;height:15px;line-height:14px;text-align:center;background:#f0f0f0;border-right:1px solid #d8d8d8;border-bottom:1px solid #d8d8d8"></div>
<div style="left:284px;top:511px;width:17px;height:15px;line-height:14px;text-align:center;background:#f0f0f0;border-right:1px solid #d8d8d8;border-bottom:1px solid #d8d8d8"></div>
<div style="left:301px;top:511px;width:17px;height:15px;line-height:14px;text-align:center;background:#f0f0f0;border-right:1px solid #d8d8d8;border-bottom:1px solid #d8d8d8"></div>
<div style="left:318px;top:511px;width:17px;height:15px;line-height:14px;text-align:center;background:#f0f0f0;border-right:1px solid #d8d8d8;border-bottom:1px solid #d8d8d8"></div>
<div style="left:335px;top:511px;width:17px;height:15px;line-height:14px;text-align:center;background:#f0f0f0;border-right:1px solid #d8d8d8;border-bottom:1px solid #d8d8d8"></div>
<div style="left:352px;top:511px;width:17px;height:15px;line-height:14px;text-align:center;background:#f0f0f0;border-right:1px solid #d8d8d8;border-bottom:1px solid #d8d8d8"></div>
<div style="left:369px;top:511px;width:17px;height:15px;line-height:14px;text-align:center;background:#f0f0f0;border-right:1px solid #d8d8d8;border-bottom:1px solid #d8d8d8"></div>
<div style="left:386px;top:511px;width:17px;height:15px;line-height:14px;text-align:center;background:#f0f0f0;border-right:1px solid #d8d8d8;border-bottom:1px solid #d8d8d8"></div>
<div style="left:24px;top:534px;width:17px;height:2px;background:#808080"></div>
<div class="y" style="left:62px;top:545px;width:342px;height:9px"></div>
<span class="t" style="left:63.2px;top:543.8px;letter-spacing:0.012px;font-size:8.56px;font-weight:bold;color:#3a3a00;">&lt;&lt;&lt;&lt;&lt;&lt;&lt;&lt;&lt;&lt;&lt;&lt;&lt;&lt;&lt;&lt;&lt;&lt;&lt;&lt;&lt;&lt;&lt;&lt;&lt;&lt;&lt;&lt;&lt;&lt;&lt;&lt;&gt;&lt;&lt; &gt;&gt;&gt;&gt;&gt;&gt;&gt;&gt;&gt;&gt;&gt;&gt;&gt;&gt;&gt;&gt;&gt;&gt;&gt;&gt;&gt;&gt;&gt;&gt;&gt;&gt;&gt;&gt;&gt;&gt;&gt;&gt;</span>
</body></html>
